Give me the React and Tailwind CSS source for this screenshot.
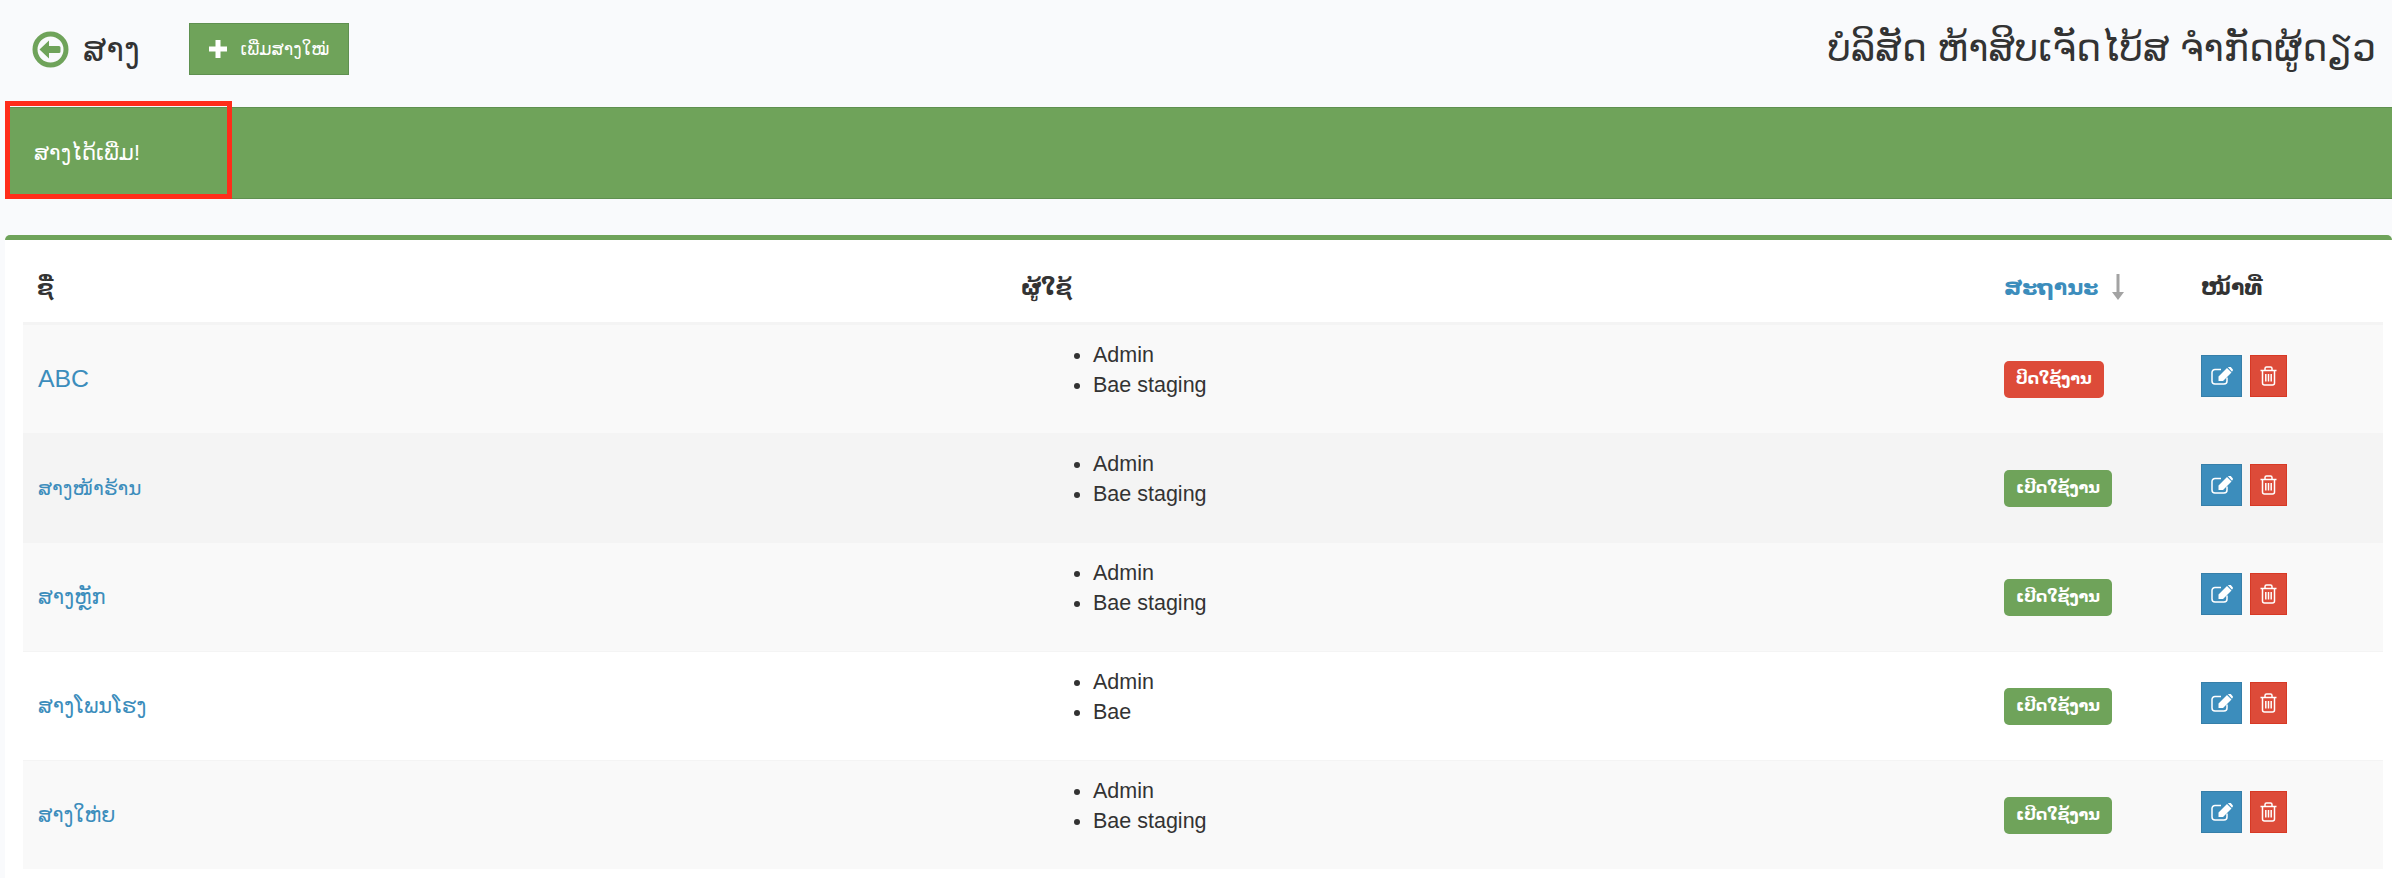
import React from 'react';

const font = "font-['Liberation_Sans','DejaVu_Sans',sans-serif]";

const rows = [
    { name: 'ABC', size: 'text-[24.8px]', users: ['Admin', 'Bae staging'], active: false, bg: 'bg-[#f9f9f9]' },
    { name: 'ສາງໜ້າຮ້ານ', size: 'text-[20px]', users: ['Admin', 'Bae staging'], active: true, bg: 'bg-[#f4f4f4]' },
    { name: 'ສາງຫຼັກ', size: 'text-[21px]', users: ['Admin', 'Bae staging'], active: true, bg: 'bg-[#f9f9f9]' },
    { name: 'ສາງໂພນໂຮງ', size: 'text-[21px]', users: ['Admin', 'Bae'], active: true, bg: 'bg-white' },
    { name: 'ສາງໃຫ່ຍ', size: 'text-[20.5px]', users: ['Admin', 'Bae staging'], active: true, bg: 'bg-[#f9f9f9]' },
];

const BackIcon = () => (
    <svg viewBox="0 0 37 37" className="w-[37px] h-[37px] shrink-0">
        <circle cx="18.5" cy="18.5" r="15.5" fill="none" stroke="#6fa35a" strokeWidth="5" />
        <path d="M7.5 18.5 L17 9.5 V15 H27 a1.5 1.5 0 0 1 1.5 1.5 V20.5 a1.5 1.5 0 0 1 -1.5 1.5 H17 V27.5 Z" fill="#6fa35a" />
    </svg>
);

const PlusIcon = () => (
    <svg viewBox="0 0 18 18" className="w-[18px] h-[18px] shrink-0" fill="white">
        <path d="M6.5 0 H11.5 V6.5 H18 V11.5 H11.5 V18 H6.5 V11.5 H0 V6.5 H6.5 Z" />
    </svg>
);

const SortIcon = () => (
    <svg viewBox="0 0 12 26" className="w-[12px] h-[26px] shrink-0" fill="#a3a3a3">
        <path d="M4.5 0 H7.5 V18 H12 L6 26 L0 18 H4.5 Z" />
    </svg>
);

const EditIcon = () => (
    <svg viewBox="0 0 22 18" className="w-[22px] h-[18px]">
        <path d="M10 2.5 H4 a3 3 0 0 0 -3 3 V14 a3 3 0 0 0 3 3 H13 a3 3 0 0 0 3 -3 V10.5" fill="none" stroke="white" strokeWidth="1.5" />
        <path d="M7.5 9.5 L16 1 L20.5 5.5 L12 14 H7.5 Z M17 0.2 L18 -0.3 a1.5 1.5 0 0 1 1.5 0 L21.5 2 a1.5 1.5 0 0 1 0 2 L21 4.8 Z" fill="white" />
    </svg>
);

const TrashIcon = () => (
    <svg viewBox="0 0 17 20" className="w-[17px] h-[20px]" fill="none" stroke="white" strokeWidth="1.5">
        <path d="M0.5 4.5 H16.5" />
        <path d="M5 4.5 V2.5 a1.5 1.5 0 0 1 1.5 -1.5 h4 a1.5 1.5 0 0 1 1.5 1.5 V4.5" />
        <path d="M2.5 4.5 V17 a2 2 0 0 0 2 2 h8 a2 2 0 0 0 2 -2 V4.5" />
        <path d="M5.8 8 V15.5 M8.5 8 V15.5 M11.2 8 V15.5" />
    </svg>
);

const App = () => {
    return (
        <div className={`${font} relative w-[2392px] h-[878px] overflow-hidden bg-[#f9fafc] text-[#333]`}>
            <header className="h-[107px] flex items-start justify-between pl-8 pr-[16px]">
                <div className="flex items-center h-[98px]">
                    <BackIcon />
                    <h1 className="ml-[14px] text-[33px] leading-none">ສາງ</h1>
                    <button className="ml-[49px] w-[160px] h-[52px] flex items-center justify-center gap-[14px] bg-[#6fa35a] border border-[#5f9050] text-white text-[17.5px]">
                        <PlusIcon />
                        <span>ເພີ່ມສາງໃໝ່</span>
                    </button>
                </div>
                <div className="h-[98px] flex items-center text-[37.6px] leading-none">ບໍລິສັດ ຫ້າສິບເຈັດໄບ້ສ ຈຳກັດຜູ້ດຽວ</div>
            </header>

            <div className="ml-[5px] h-[92px] flex items-center pl-[28px] bg-[#6fa35a] border border-[#5f9050] border-r-0 text-white text-[21.5px]">
                ສາງໄດ້ເພີ່ມ!
            </div>

            <div className="mt-[36px] ml-[5px] rounded-t-[5px] border-t-[5px] border-[#6fa35a] bg-white pl-[18px] pr-[9px] h-[643px]">
                <table className="w-full table-fixed border-separate border-spacing-0">
                    <thead>
                        <tr className="text-[22px] font-bold">
                            <th className="h-[84px] pt-[12px] border-b-2 border-[#f4f4f4] w-[998px] text-left pl-[14px]">ຊື່</th>
                            <th className="h-[84px] pt-[12px] border-b-2 border-[#f4f4f4] w-[983px] text-left">ຜູ້ໃຊ້</th>
                            <th className="h-[84px] pt-[12px] border-b-2 border-[#f4f4f4] w-[197px] text-left text-[#3c8dbc]">
                                <span className="flex items-center gap-[14px]">
                                    ສະຖານະ
                                    <SortIcon />
                                </span>
                            </th>
                            <th className="h-[84px] pt-[12px] border-b-2 border-[#f4f4f4] text-left">ໜ້າທີ່</th>
                        </tr>
                    </thead>
                    <tbody>
                        {rows.map((r) => (
                            <tr key={r.name} className={r.bg}>
                                <td className={`h-[109px] border-t border-[#f4f4f4] pl-[15px] text-[#3c8dbc] ${r.size}`}>{r.name}</td>
                                <td className="h-[109px] border-t border-[#f4f4f4] align-top pt-[15px]">
                                    <ul className="list-disc pl-[72px] text-[21.5px] leading-[30px]">
                                        {r.users.map((u) => <li key={u}>{u}</li>)}
                                    </ul>
                                </td>
                                <td className="h-[109px] border-t border-[#f4f4f4]">
                                    <span className={`inline-block h-[37px] leading-[35px] px-[12px] rounded-[5px] text-white text-[16px] font-bold ${r.active ? 'bg-[#6fa35a]' : 'bg-[#dd4b39]'}`}>
                                        {r.active ? 'ເປີດໃຊ້ງານ' : 'ປິດໃຊ້ງານ'}
                                    </span>
                                </td>
                                <td className="h-[109px] border-t border-[#f4f4f4] align-top pt-[30px]">
                                    <div className="flex gap-2">
                                        <button className="w-[41px] h-[42px] flex items-center justify-center bg-[#3c8dbc] border border-[#367fa9]">
                                            <EditIcon />
                                        </button>
                                        <button className="w-[37px] h-[42px] flex items-center justify-center bg-[#dd4b39] border border-[#d73925]">
                                            <TrashIcon />
                                        </button>
                                    </div>
                                </td>
                            </tr>
                        ))}
                    </tbody>
                </table>
            </div>

            <div className="absolute left-[5px] top-[101px] w-[227px] h-[98px] border-[5px] border-[#ff2d1a]" />
        </div>
    );
};

export default App;
